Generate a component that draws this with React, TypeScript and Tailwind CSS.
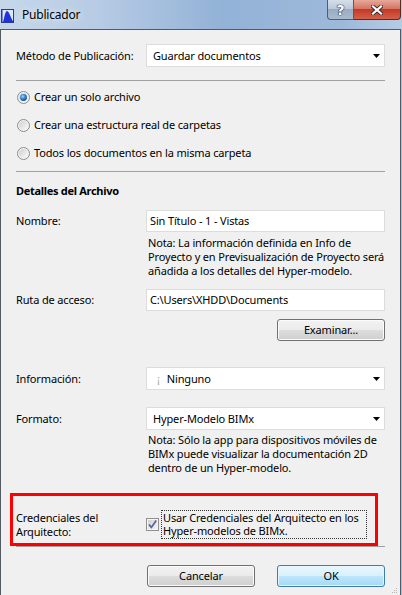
import React from "react";

const base = "font-['Noto_Sans','Segoe_UI',sans-serif] text-[11px] leading-[14px] tracking-[-0.15px] text-black";

const Radio = ({ checked }: { checked?: boolean }) => (
  <svg width="13" height="13" viewBox="0 0 13 13" className="shrink-0">
    <defs>
      <linearGradient id="rfill" x1="0" y1="0" x2="1" y2="1">
        <stop offset="0" stopColor="#cfcfcf" />
        <stop offset="1" stopColor="#fafafa" />
      </linearGradient>
      <radialGradient id="rdot" cx="0.4" cy="0.35" r="0.75">
        <stop offset="0" stopColor="#9fd6fb" />
        <stop offset="0.5" stopColor="#2c7fd2" />
        <stop offset="1" stopColor="#0b3a74" />
      </radialGradient>
    </defs>
    <circle cx="6.5" cy="6.5" r="6" fill="#f3f3f3" stroke="#8b8c8c" />
    <circle cx="6.5" cy="6.5" r="4.6" fill="url(#rfill)" />
    {checked && <circle cx="6.5" cy="6.5" r="3.4" fill="url(#rdot)" />}
  </svg>
);

const Checkbox = () => (
  <svg width="13" height="13" viewBox="0 0 13 13" className="shrink-0">
    <defs>
      <linearGradient id="cfill" x1="0" y1="0" x2="1" y2="1">
        <stop offset="0" stopColor="#d2d2d2" />
        <stop offset="1" stopColor="#f4f4f4" />
      </linearGradient>
    </defs>
    <rect x="0.5" y="0.5" width="12" height="12" fill="#f6f6f6" stroke="#8f8f8f" />
    <rect x="2" y="2" width="9" height="9" fill="url(#cfill)" />
    <path d="M3 6.5 L5.4 9.4 L10.2 2.6" fill="none" stroke="#4f64a0" strokeWidth="1.7" />
  </svg>
);

const Arrow = () => (
  <svg width="7" height="4" viewBox="0 0 7 4" className="shrink-0">
    <path d="M0 0H7L3.5 4Z" fill="#000" />
  </svg>
);

const Select = ({ children }: { children: React.ReactNode }) => (
  <div className="flex h-[23px] w-[239px] items-center border border-[#dcdcdc] bg-white pl-[6px] pr-[4px]">
    <div className="flex flex-1 items-center whitespace-nowrap">{children}</div>
    <Arrow />
  </div>
);

const TextBox = ({ value }: { value: string }) => (
  <div className="flex h-[22px] w-[239px] items-center border border-[#dcdcdc] bg-white pl-[3px] whitespace-nowrap">
    {value}
  </div>
);

const Button = ({ label, primary }: { label: string; primary?: boolean }) => (
  <button
    className={
      primary
        ? "h-[22px] w-[108px] rounded-[3px] border border-[#3c7fb1] bg-[linear-gradient(#eaf6fd_0%,#d9f0fc_50%,#bee6fd_50%,#a7d9f5_100%)] shadow-[inset_0_0_0_1px_#e3f4fc]"
        : "h-[22px] w-[108px] rounded-[3px] border border-[#707070] bg-[linear-gradient(#f2f2f2_0%,#ebebeb_50%,#dddddd_50%,#cfcfcf_100%)] shadow-[inset_0_0_0_1px_#fbfbfb]"
    }
  >
    {label}
  </button>
);

const Row = ({ label, children, h }: { label: string; children: React.ReactNode; h: string }) => (
  <div className={`flex items-center ${h}`}>
    <div className="w-[130px] shrink-0 whitespace-nowrap">{label}</div>
    {children}
  </div>
);

const Sep = ({ className }: { className: string }) => <div className={`h-px bg-[#a0a0a0] ${className}`} />;

const AppIcon = () => (
  <svg width="13" height="14" viewBox="0 0 13 14" className="ml-[1px] mt-[1px] shrink-0">
    <rect x="0" y="0" width="13" height="14" fill="#dfe7f6" />
    <path d="M1 14 C3 14 3.5 2 6 2 C8.5 2 10 11 13 13 L13 14Z" fill="#1f33d6" />
    <rect x="0" y="0" width="1.5" height="14" fill="#1f33d6" />
    <rect x="0.5" y="0.5" width="12" height="13" fill="none" stroke="#2a3a8c" />
  </svg>
);

export default function App() {
  return (
    <div className={`${base} h-[595px] w-[402px] overflow-hidden bg-[#a9c1dc]`}>
      {/* title bar */}
      <div className="flex h-[29px] bg-[linear-gradient(to_right,#c6d7ea_0%,#b6cbe4_25%,#93b2d7_55%,#9db9da_85%,#b5cbe4_100%)]">
        <div className="flex items-center pt-[1px]">
          <AppIcon />
          <span className="ml-[8px] text-[12px] tracking-[-0.2px] [text-shadow:0_0_6px_#ffffff]">Publicador</span>
        </div>
        <div className="flex-1" />
        <div className="mr-[1px] flex h-[20px] self-start">
          <div className="flex w-[27px] items-center justify-center rounded-bl-[4px] border border-t-0 border-[#4d5d72] bg-[linear-gradient(#d5dfea_0%,#b8c7d8_50%,#9aacc2_50%,#aabbd0_100%)] font-['DejaVu_Sans',sans-serif] text-[14px] leading-[14px] font-bold text-white [text-shadow:0_0_1px_#222,0_0_1px_#222,0_0_1px_#222]">
            ?
          </div>
          <div className="flex w-[47px] items-center justify-center rounded-br-[4px] border border-l-0 border-t-0 border-[#5a2a25] bg-[linear-gradient(#e6a89b_0%,#d67565_45%,#c23a25_50%,#d5604a_100%)]">
            <svg width="12" height="10" viewBox="0 0 12 10">
              <path d="M2 1.5L10 8.5M10 1.5L2 8.5" stroke="#3a2a2a" strokeWidth="4" strokeLinecap="square" />
              <path d="M2 1.5L10 8.5M10 1.5L2 8.5" stroke="#ffffff" strokeWidth="2.2" strokeLinecap="square" />
            </svg>
          </div>
        </div>
      </div>

      {/* client area */}
      <div className="relative h-[566px] w-[401px] border-x border-t border-[#535a63] bg-[#f0f0f0] px-[15px] pt-[14px]">
        <Row label="Método de Publicación:" h="h-[23px]">
          <Select>Guardar documentos</Select>
        </Row>

        <Sep className="mt-[13px]" />

        <div className="mt-[2px] flex flex-col">
          {[
            ["Crear un solo archivo", true],
            ["Crear una estructura real de carpetas", false],
            ["Todos los documentos en la misma carpeta", false],
          ].map(([t, c]) => (
            <div key={t as string} className="flex h-[28px] items-center gap-[4px] pl-[1px]">
              <Radio checked={c as boolean} />
              <span>{t as string}</span>
            </div>
          ))}
        </div>

        <Sep className="mt-[4px]" />

        <div className="mt-[12px] font-bold tracking-[-0.3px]">Detalles del Archivo</div>

        <Row label="Nombre:" h="mt-[12px] h-[22px]">
          <TextBox value="Sin Título - 1 - Vistas" />
        </Row>
        <div className="mt-[4px] pl-[132px] whitespace-nowrap">
          Nota: La información definida en Info de
          <br />
          Proyecto y en Previsualización de Proyecto será
          <br />
          añadida a los detalles del Hyper-modelo.
        </div>

        <Row label="Ruta de acceso:" h="mt-[11px] h-[22px]">
          <TextBox value="C:\Users\XHDD\Documents" />
        </Row>
        <div className="mt-[8px] flex justify-end">
          <Button label="Examinar..." />
        </div>

        <Row label="Información:" h="mt-[26px] h-[23px]">
          <Select>
            <span className="ml-[4px] text-[#a8a8a8]">¡</span>
            <span className="ml-[7px]">Ninguno</span>
          </Select>
        </Row>

        <Row label="Formato:" h="mt-[17px] h-[23px]">
          <Select>Hyper-Modelo BIMx</Select>
        </Row>
        <div className="mt-[3px] pl-[132px] whitespace-nowrap">
          Nota: Sólo la app para dispositivos móviles de
          <br />
          BIMx puede visualizar la documentación 2D
          <br />
          dentro de un Hyper-modelo.
        </div>

        <div className="relative mt-[34px] flex items-center">
          <div className="w-[130px] shrink-0 self-start pt-[2px]">
            Credenciales del
            <br />
            Arquitecto:
          </div>
          <Checkbox />
          <div className="ml-[2px] w-[206px] whitespace-nowrap border border-dotted border-[#333] pl-[1px] leading-[13.5px]">
            Usar Credenciales del Arquitecto en los
            <br />
            Hyper-modelos de BIMx.
          </div>
          {/* red annotation frame */}
          <div className="pointer-events-none absolute left-[-6px] top-[-16px] h-[53px] w-[368px] border-[3px] border-[#ff0000]" />
        </div>

        <Sep className="mt-[7px]" />

        <div className="mt-[18px] flex justify-end gap-[22px]">
          <Button label="Cancelar" />
          <Button label="OK" primary />
        </div>

        <svg width="8" height="8" viewBox="0 0 8 8" className="absolute bottom-[1px] right-[2px]">
          <rect x="6" y="2" width="1" height="1" fill="#b5b5b5" />
          <rect x="4" y="4" width="1" height="1" fill="#b5b5b5" />
          <rect x="6" y="4" width="1" height="1" fill="#b5b5b5" />
          <rect x="2" y="6" width="1" height="1" fill="#b5b5b5" />
          <rect x="4" y="6" width="1" height="1" fill="#b5b5b5" />
          <rect x="6" y="6" width="1" height="1" fill="#b5b5b5" />
        </svg>
      </div>
    </div>
  );
}
